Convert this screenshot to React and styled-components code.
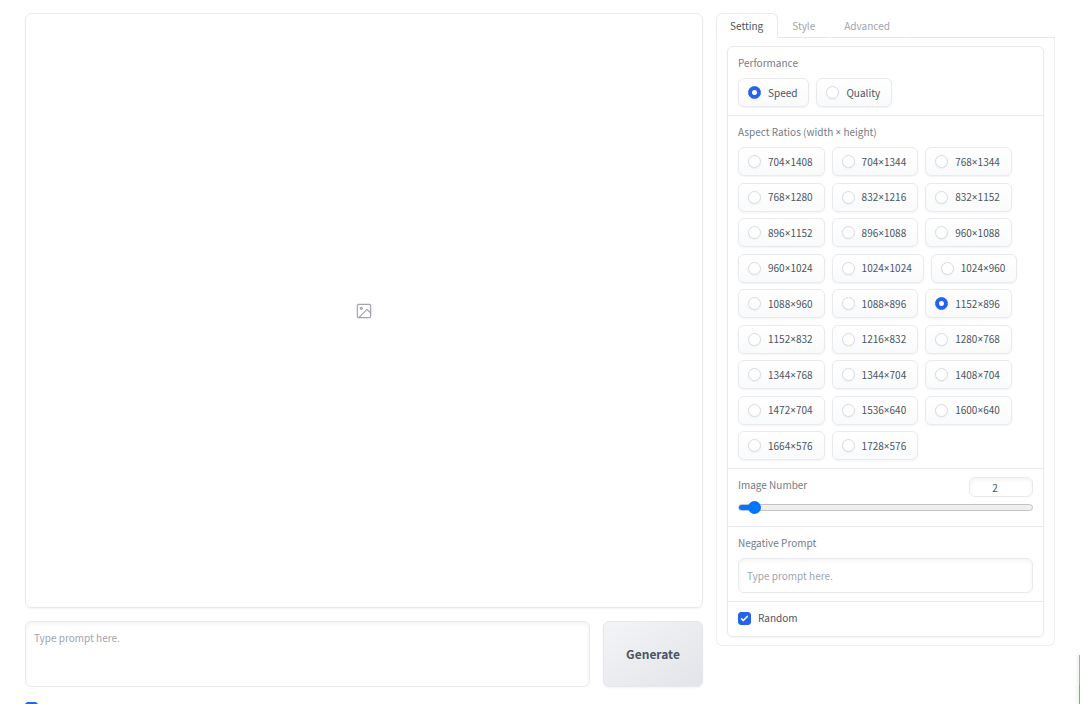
import React, { useState } from "react";
import styled, { createGlobalStyle } from "styled-components";

const GlobalStyle = createGlobalStyle`
  *, *::before, *::after { box-sizing: border-box; }
  body {
    margin: 0;
    height: 100vh;
    overflow: hidden;
    background: #fff;
    color: #4b5563;
    font-family: "Noto Sans CJK SC", "Noto Sans", sans-serif;
    font-size: 10px;
    line-height: 16px;
  }
  button, input, textarea { font: inherit; color: inherit; margin: 0; }
  fieldset { border: 0; margin: 0; padding: 0; min-width: 0; }
`;

const Page = styled.main`
  display: grid;
  grid-template-columns: 2fr 1fr;
  align-items: start;
  gap: 13px;
  padding: 13px 25px;
`;

const Column = styled.div`
  display: flex;
  flex-direction: column;
  gap: 13px;
  min-width: 0;
`;

const Gallery = styled.section`
  display: flex;
  align-items: center;
  justify-content: center;
  min-height: 595px;
  border: 1px solid #e8eaed;
  border-radius: 6px;
  box-shadow: 0 1px 2px rgba(0, 0, 0, 0.05);
  color: #a3a5ab;
`;

const PromptRow = styled.div`
  display: flex;
  gap: 13px;
`;

const PromptInput = styled.textarea`
  flex: 1;
  min-width: 0;
  height: 66px;
  padding: 8px;
  border: 1px solid #e8eaed;
  border-radius: 6px;
  outline: none;
  resize: none;
  background: #fff;
  box-shadow: inset 0 2px 4px rgba(0, 0, 0, 0.05);
  &::placeholder { color: #a0a4ae; opacity: 1; }
`;

const GenerateButton = styled.button`
  width: 100px;
  border: 1px solid #e5e7eb;
  border-radius: 6px;
  background: linear-gradient(to bottom right, #f3f4f6, #e2e4e9);
  box-shadow: 0 1px 2px rgba(0, 0, 0, 0.05);
  color: #4b5563;
  font-size: 12px;
  font-weight: 600;
`;

const TabBar = styled.div`
  display: flex;
  align-items: stretch;
  height: 25px;

  &::after {
    content: "";
    flex: 1;
    border-bottom: 1px solid #e5e7eb;
  }
`;

const Tab = styled.button`
  padding: 0 14px 0 13px;
  border: 1px solid ${(p) => (p.$active ? "#e8eaed" : "transparent")};
  border-bottom-color: ${(p) => (p.$active ? "transparent" : "#e5e7eb")};
  border-radius: ${(p) => (p.$active ? "6px 6px 0 0" : "0")};
  background: #fff;
  color: ${(p) => (p.$active ? "#4b5563" : "#a0a4ae")};
`;

const TabPanel = styled.div`
  padding: 8px 10px;
  border: 1px solid #eceef1;
  border-top: 0;
  border-radius: 0 0 6px 6px;
`;

const Form = styled.form`
  border: 1px solid #e8eaed;
  border-radius: 6px;
  box-shadow: 0 1px 2px rgba(0, 0, 0, 0.05);
`;

const Section = styled.div`
  padding: 8px 10px;
  & + & { border-top: 1px solid #e8eaed; }
  &:last-child { padding-bottom: 10px; }
`;

const Caption = styled.span`
  display: block;
  color: #767b86;
`;

const TimesSign = styled.span`
  font-family: "Noto Sans", sans-serif;
  line-height: 1;
`;

const Options = styled.div`
  display: flex;
  flex-wrap: wrap;
  column-gap: 7px;
  align-content: space-between;
  height: ${(p) => p.$height}px;
  margin-top: 7px;
`;

const Chip = styled.label`
  display: flex;
  align-items: center;
  gap: 7px;
  height: 29px;
  padding: 0 11px 0 9px;
  border: 1px solid #e8eaed;
  border-radius: 6px;
  background: linear-gradient(to top, #f9fafb, #fff);
  box-shadow: 0 1px 2px rgba(0, 0, 0, 0.05);
`;

const Radio = styled.input.attrs({ type: "radio" })`
  appearance: none;
  width: 13px;
  height: 13px;
  border: 1px solid #d8dbe0;
  border-radius: 50%;
  background: #fff;
  box-shadow: 0 1px 2px rgba(0, 0, 0, 0.05);
  &:checked {
    border-color: #2563eb;
    background: radial-gradient(circle, #fff 2px, #2563eb 3px);
  }
`;

const SliderHead = styled.div`
  display: flex;
  justify-content: space-between;
  align-items: flex-start;
`;

const NumberBox = styled.input`
  width: 64px;
  height: 20px;
  padding: 0 12px 0 0;
  border: 1px solid #e8eaed;
  border-radius: 6px;
  outline: none;
  box-shadow: inset 0 2px 4px rgba(0, 0, 0, 0.05);
  text-align: center;
`;

const Slider = styled.input.attrs({ type: "range" })`
  appearance: none;
  display: block;
  width: 100%;
  height: 16px;
  margin: 2px 0 3px;
  background: transparent;

  &::-webkit-slider-runnable-track {
    height: 7px;
    border: 1px solid #c4c4c4;
    border-radius: 4px;
    background: linear-gradient(to right, #0075ff var(--fill), #efefef var(--fill)) border-box;
  }
  &::-webkit-slider-thumb {
    appearance: none;
    width: 13px;
    height: 13px;
    margin-top: -4px;
    border-radius: 50%;
    background: #0075ff;
  }
`;

const TextField = styled.input`
  display: block;
  width: 100%;
  height: 35px;
  margin-top: 7px;
  padding: 0 8px;
  border: 1px solid #e8eaed;
  border-radius: 6px;
  outline: none;
  box-shadow: inset 0 2px 4px rgba(0, 0, 0, 0.05);
  &::placeholder { color: #a0a4ae; opacity: 1; }
`;

const CheckLabel = styled.label`
  display: flex;
  align-items: center;
  gap: 7px;
  height: 16px;
`;

const CheckFrame = styled.span`
  display: grid;
  width: 13px;
  height: 13px;
  & > * { grid-area: 1 / 1; }
  & > svg { pointer-events: none; z-index: 1; }
`;

const Checkbox = styled.input.attrs({ type: "checkbox" })`
  appearance: none;
  width: 13px;
  height: 13px;
  border: 1px solid #d1d5db;
  border-radius: 3px;
  &:checked { border-color: #2563eb; background: #2563eb; }
`;

const EdgeWidget = styled.aside`
  position: fixed;
  right: 0;
  bottom: 0;
  width: 1px;
  height: 49px;
  background: linear-gradient(to bottom, #a9a9a9 30px, #55c878 30px);
  box-shadow: 0 0 4px rgba(0, 0, 0, 0.3);
`;

const ratios = [
  "704×1408", "704×1344", "768×1344", "768×1280", "832×1216", "832×1152",
  "896×1152", "896×1088", "960×1088", "960×1024", "1024×1024", "1024×960",
  "1088×960", "1088×896", "1152×896", "1152×832", "1216×832", "1280×768",
  "1344×768", "1344×704", "1408×704", "1472×704", "1536×640", "1600×640",
  "1664×576", "1728×576",
];

const MAX_IMAGES = 32;

// The CJK family draws a full-width ×, so the sign takes a Latin face.
function Dimensions({ text }) {
  const [before, after] = text.split("×");
  if (after === undefined) return <span>{text}</span>;
  return (
    <span>
      {before}
      <TimesSign>×</TimesSign>
      {after}
    </span>
  );
}

function RadioGroup({ name, caption, items, initial, height }) {
  const [value, setValue] = useState(initial);
  return (
    <Section as="fieldset" role="radiogroup" aria-label={caption}>
      <Caption>
        <Dimensions text={caption} />
      </Caption>
      <Options $height={height}>
        {items.map((item) => (
          <Chip key={item}>
            <Radio name={name} checked={value === item} onChange={() => setValue(item)} />
            <Dimensions text={item} />
          </Chip>
        ))}
      </Options>
    </Section>
  );
}

function Check({ label, hiddenLabel }) {
  return (
    <CheckLabel>
      <CheckFrame>
        <Checkbox defaultChecked aria-label={hiddenLabel} />
        <svg viewBox="0 0 16 16" width="13" height="13" fill="#fff" aria-hidden="true">
          <path d="M12.207 4.793a1 1 0 0 1 0 1.414l-5 5a1 1 0 0 1-1.414 0l-2-2a1 1 0 0 1 1.414-1.414L6.5 9.086l4.293-4.293a1 1 0 0 1 1.414 0z" />
        </svg>
      </CheckFrame>
      {label}
    </CheckLabel>
  );
}

export default function App() {
  const [tab, setTab] = useState("Setting");
  const [count, setCount] = useState(2);
  const ratio = (count - 1) / (MAX_IMAGES - 1);
  return (
    <>
      <GlobalStyle />
      <Page>
        <Column>
          <Gallery aria-label="Gallery">
            <svg width="16" height="16" viewBox="0 0 24 24" fill="none" stroke="currentColor" strokeWidth="1.8" strokeLinecap="round" strokeLinejoin="round" aria-hidden="true">
              <rect x="2" y="2" width="20" height="20" rx="2" />
              <circle cx="8" cy="8" r="1.5" />
              <polyline points="22 15 16.5 9.5 4.5 21.5" />
            </svg>
          </Gallery>
          <PromptRow>
            <PromptInput aria-label="Prompt" placeholder="Type prompt here." />
            <GenerateButton type="button">Generate</GenerateButton>
          </PromptRow>
          <Check hiddenLabel="Advanced" />
        </Column>
        <div>
          <TabBar role="tablist">
            {["Setting", "Style", "Advanced"].map((name) => (
              <Tab key={name} type="button" role="tab" aria-selected={tab === name} $active={tab === name} onClick={() => setTab(name)}>
                {name}
              </Tab>
            ))}
          </TabBar>
          <TabPanel role="tabpanel">
            <Form>
              <RadioGroup name="performance" caption="Performance" items={["Speed", "Quality"]} initial="Speed" height={29} />
              <RadioGroup name="ratio" caption="Aspect Ratios (width × height)" items={ratios} initial="1152×896" height={313} />
              <Section>
                <SliderHead>
                  <Caption as="label" htmlFor="count">Image Number</Caption>
                  <NumberBox id="count" inputMode="numeric" value={count} onChange={(e) => setCount(Number(e.target.value) || 1)} />
                </SliderHead>
                <Slider
                  aria-label="Image Number"
                  min="1"
                  max={MAX_IMAGES}
                  value={count}
                  onChange={(e) => setCount(Number(e.target.value))}
                  style={{ "--fill": `calc(6px + (100% - 13px) * ${ratio})` }}
                />
              </Section>
              <Section>
                <Caption as="label" htmlFor="negative">Negative Prompt</Caption>
                <TextField id="negative" placeholder="Type prompt here." />
              </Section>
              <Section>
                <Check label="Random" />
              </Section>
            </Form>
          </TabPanel>
        </div>
      </Page>
      <EdgeWidget aria-hidden="true" />
    </>
  );
}
